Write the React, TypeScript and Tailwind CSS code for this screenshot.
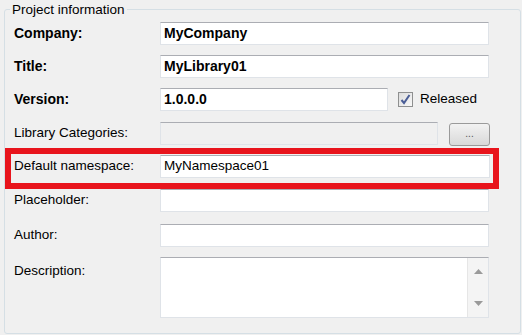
import React from "react";

const font = { fontFamily: '"Liberation Sans", Arial, sans-serif' };

function Box({ w, children, disabled }: { w: string; children?: React.ReactNode; disabled?: boolean }) {
  return (
    <div
      className={`${w} h-[23px] border border-[#dfe3e8] border-t-[#abadb3] flex items-center pl-[3px] ${disabled ? "bg-[#f0f0f0]" : "bg-white"}`}
    >
      {children}
    </div>
  );
}

function Row({ label, bold, mt, children }: { label: string; bold?: boolean; mt: string; children: React.ReactNode }) {
  return (
    <div className={`flex items-center ${mt} h-[23px]`}>
      <div className={`w-[154px] shrink-0 pl-[8px] ${bold ? "font-bold text-[14px]" : "text-[13.5px]"} text-black`}>{label}</div>
      {children}
    </div>
  );
}

export default function App() {
  return (
    <div className="w-[522px] h-[335px] bg-[#f0f0f0] pt-[9px] pl-[4px] overflow-hidden" style={font}>
      <div className="relative w-[517px] h-[325px] border border-[#d5dfe5] rounded-[3px]">
        <div className="absolute left-[5px] top-[-8px] bg-[#f0f0f0] px-[2px] text-[13.5px] leading-[15px] text-black">
          Project information
        </div>
        <div className="flex flex-col pt-[12px] pl-[1px]">
          <Row label="Company:" bold mt="mt-0">
            <Box w="w-[329px]">
              <span className="font-bold text-[14px]">MyCompany</span>
            </Box>
          </Row>
          <Row label="Title:" bold mt="mt-[10px]">
            <Box w="w-[329px]">
              <span className="font-bold text-[14px]">MyLibrary01</span>
            </Box>
          </Row>
          <Row label="Version:" bold mt="mt-[10px]">
            <Box w="w-[228px]">
              <span className="font-bold text-[14px]">1.0.0.0</span>
            </Box>
            <div className="ml-[10px] w-[15px] h-[15px] border border-[#8e8f8f] bg-gradient-to-br from-[#dcdcdc] to-[#f8f8f8] flex items-center justify-center">
              <svg width="11" height="11" viewBox="0 0 11 11">
                <path d="M1.5 6 L4 9 L9.5 1" fill="none" stroke="#4a5d96" strokeWidth="2" />
              </svg>
            </div>
            <span className="ml-[7px] text-[13.5px]">Released</span>
          </Row>
          <Row label="Library Categories:" mt="mt-[11px]">
            <Box w="w-[278px]" disabled />
            <div className="ml-[11px] mt-[2px] w-[41px] h-[23px] rounded-[3px] border border-[#9a9a9a] bg-gradient-to-b from-[#f2f2f2] to-[#d9d9d9] flex items-center justify-center text-[10px] text-[#555] leading-none pb-[2px]">
              ...
            </div>
          </Row>
          <div className="relative">
            <Row label="Default namespace:" mt="mt-[10px]">
              <Box w="w-[330px]">
                <span className="text-[13.5px]">MyNamespace01</span>
              </Box>
            </Row>
            <div className="absolute left-[-1px] top-[3px] w-[494px] h-[41px] border-[6px] border-[#e8141c]" />
          </div>
          <Row label="Placeholder:" mt="mt-[11px]">
            <Box w="w-[329px]" />
          </Row>
          <Row label="Author:" mt="mt-[12px]">
            <Box w="w-[329px]" />
          </Row>
          <div className="flex mt-[10px]">
            <div className="w-[154px] shrink-0 pl-[8px] pt-[4px] text-[13.5px] text-black">Description:</div>
            <div className="w-[329px] h-[61px] border border-[#dfe3e8] border-t-[#abadb3] bg-white flex justify-end">
              <div className="w-[21px] h-full bg-[#f4f4f4] border-l border-[#e6e6e6] flex flex-col items-center justify-between py-[11px]">
                <svg width="9" height="5" viewBox="0 0 9 5">
                  <path d="M0 5 L4.5 0 L9 5 Z" fill="#9a9a9a" />
                </svg>
                <svg width="9" height="5" viewBox="0 0 9 5">
                  <path d="M0 0 L9 0 L4.5 5 Z" fill="#9a9a9a" />
                </svg>
              </div>
            </div>
          </div>
        </div>
      </div>
    </div>
  );
}
